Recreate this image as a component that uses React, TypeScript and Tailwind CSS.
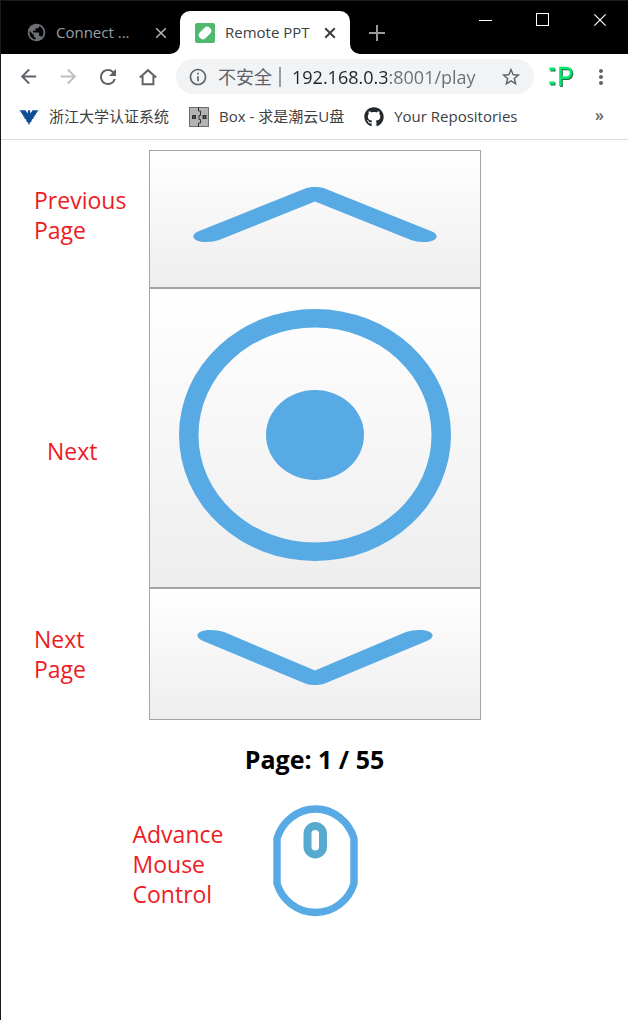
import { useState } from "react";
import type { ReactNode } from "react";
import { FaGithub } from "react-icons/fa";
import {
  MdArrowBack,
  MdArrowForward,
  MdMoreVert,
  MdOutlineInfo,
  MdPublic,
  MdRefresh,
  MdStarBorder,
} from "react-icons/md";

function CloseIcon({ className }: { className: string }) {
  return (
    <svg viewBox="0 0 12 12" className={className} fill="none" stroke="currentColor" aria-hidden="true">
      <path d="M1.2 1.2 10.8 10.8M10.8 1.2 1.2 10.8" />
    </svg>
  );
}

function RemoteIcon() {
  return (
    <svg viewBox="0 0 20 20" className="size-5 shrink-0" aria-hidden="true">
      <rect width="20" height="20" rx="2" fill="#4fba6f" />
      <rect x="3" y="6" width="14" height="8" rx="3.9" fill="#fff" transform="rotate(-45 10 10)" />
      <path d="M12.6 7.4 13.4 6.6" stroke="#b9e0c5" strokeWidth="1" />
    </svg>
  );
}

function TabFlare({ className }: { className: string }) {
  return (
    <svg viewBox="0 0 10 10" className={className} aria-hidden="true">
      <path d="M10 0v10H0A10 10 0 0 0 10 0Z" fill="#fff" />
    </svg>
  );
}

function HomeIcon() {
  return (
    <svg viewBox="0 0 20 20" className="size-5" fill="none" stroke="currentColor" strokeWidth="2" aria-hidden="true">
      <path d="M1.8 10.6 10 3.2l8.2 7.4M4.6 9v8.2h10.8V9" />
    </svg>
  );
}

function EagleIcon() {
  return (
    <svg viewBox="0 0 20 18" className="h-[18px] w-5 shrink-0" aria-hidden="true">
      <path
        d="M0.5 2.200H6.500L8.500 5.500 9 2.800 10 1.800 11 2.800 11.500 5.500 13.500 2.200H19.500L18.800 3.400 17.800 3.800 18 5 16.800 5.400 17 6.600 15.800 7 15.900 8.400 14.600 8.800 14.500 10.800 13 11.200 12.200 14 11 14.400 10 17.400 9 14.400 7.800 14 7 11.200 5.500 10.800 5.400 8.800 4.100 8.400 4.200 7 3 6.600 3.200 5.400 2 5 2.200 3.800 1.200 3.400Z"
        fill="#0f4c96"
      />
    </svg>
  );
}

function BoxIcon() {
  return (
    <svg viewBox="0 0 20 20" className="size-5 shrink-0" aria-hidden="true">
      <rect x=".5" y=".5" width="19" height="19" fill="#b3b3b3" stroke="#6d6d6d" />
      <path d="M9.500 0v4h2v4.500h-1.500v4h1.500V16h-2v4" fill="none" stroke="#333" strokeWidth="1" />
      <path d="M3 8h4v4H3zM13.500 8h4v4h-4z" fill="#333" />
      <path d="M4.500 9.500h1v1h-1zM15 9.500h1v1h-1z" fill="#888" />
    </svg>
  );
}

function SmileyExtensionIcon() {
  return (
    <svg viewBox="0 0 26 24" className="h-6 w-[26px]" fill="none" aria-hidden="true">
      <g stroke="#1f6b48" transform="translate(1 1)">
        <path d="M1.500 4h5M1.500 18h5" strokeWidth="3" />
        <path d="M12.500 21V3h5.500c3.200 0 5 2 5 4.800s-1.800 5-5 5h-5" strokeWidth="2.600" />
      </g>
      <g stroke="#00e76b">
        <path d="M1.500 4h5M1.500 18h5" strokeWidth="3" />
        <path d="M12.500 21V3h5.500c3.200 0 5 2 5 4.800s-1.800 5-5 5h-5" strokeWidth="2.600" />
      </g>
    </svg>
  );
}

function UpIcon() {
  return (
    <svg viewBox="0 0 246 55" className="h-[55px] w-[246px]" fill="#57aae4" aria-hidden="true">
      <path d="M112 2C118-.6 128-.6 134 2L240 44.500C248 48 246 55 231 55Q224 55 219 53L123 14.500 27 53Q22 55 15 55C0 55-2 48 6 44.500Z" />
    </svg>
  );
}

function DownIcon() {
  return (
    <svg viewBox="0 0 238 55" className="h-[55px] w-[238px]" fill="#57aae4" aria-hidden="true">
      <path d="M108 53C114 55.700 124 55.700 130 53L232 10.500C240 7 238 0 223 0Q216 0 210 2L119 40.500 28 2Q22 0 15 0C0 0-2 7 6 10.500Z" />
    </svg>
  );
}

function TargetIcon() {
  return (
    <svg viewBox="0 0 272 252" className="h-[252px] w-[272px]" aria-hidden="true">
      <path
        d="M136 0a136 126 0 1 0 0 252a136 126 0 1 0 0-252ZM136 18.500a116.500 107.500 0 1 1 0 215a116.500 107.500 0 1 1 0-215Z"
        fill="#57aae4"
        fillRule="evenodd"
      />
      <ellipse cx="136" cy="126" rx="49" ry="45" fill="#57aae4" />
    </svg>
  );
}

function MouseIcon() {
  return (
    <svg viewBox="0 0 86 112" className="h-28 w-[86px]" fill="none" aria-hidden="true">
      <path
        d="M5 33.500C10 17 25 4 43.500 4S77 17 82 33.500V78.500C77 95 62 107.500 43.500 107.500S10 95 5 78.500Z"
        stroke="#57aae4"
        strokeWidth="7.400"
        strokeLinejoin="round"
      />
      <rect x="35.500" y="21" width="15.500" height="28.500" rx="7.750" stroke="#57aacd" strokeWidth="8" />
    </svg>
  );
}

function ToolButton({ label, className = "", children }: { label: string; className?: string; children: ReactNode }) {
  return (
    <button type="button" aria-label={label} className={`flex size-6 shrink-0 items-center justify-center ${className}`}>
      {children}
    </button>
  );
}

function Bookmark({ label, icon }: { label: string; icon: ReactNode }) {
  return (
    <a href="#" className="flex items-center gap-[10px] whitespace-nowrap">
      {icon}
      {label}
    </a>
  );
}

const padButton =
  "flex w-full items-center justify-center border border-[#a3a3a3] bg-linear-to-b from-white to-[#eeeeee]";
const noteText = "text-[23px] leading-[30px] text-[#ed1c24]";

export default function App() {
  const [page, setPage] = useState(1);
  const [url, setUrl] = useState("192.168.0.3:8001/play");
  const total = 55;
  const next = () => setPage((p) => Math.min(total, p + 1));
  const previous = () => setPage((p) => Math.max(1, p - 1));

  return (
    <div className="min-h-screen border-t border-l border-[#1a1a1a] bg-white font-['Open_Sans','Noto_Sans_CJK_SC',sans-serif]">
      <header>
        <div className="flex h-[53px] items-end bg-black">
          <div className="flex h-[43px] w-[179px] items-center pr-[13px] pl-[25px] text-[15px] text-[#9aa0a6]">
            <MdPublic className="mr-[9px] size-[21px] shrink-0 text-[#6b6e73]" />
            <button type="button" className="flex-1 text-left whitespace-nowrap">Connect ...</button>
            <button type="button" aria-label="Close Connect" className="text-[#b4b7bb]">
              <CloseIcon className="size-3 stroke-[1.5]" />
            </button>
          </div>
          <div className="relative flex h-[43px] w-[170px] items-center rounded-t-[10px] bg-white pr-[14px] pl-[15px] text-[15px] text-[#3c4043]">
            <TabFlare className="absolute bottom-0 -left-[10px] size-[10px]" />
            <RemoteIcon />
            <button type="button" className="ml-[10px] flex-1 text-left whitespace-nowrap">Remote PPT</button>
            <button type="button" aria-label="Close Remote PPT">
              <CloseIcon className="size-3 stroke-2" />
            </button>
            <TabFlare className="absolute -right-[10px] bottom-0 size-[10px] -scale-x-100" />
          </div>
          <button type="button" aria-label="New tab" className="ml-[19px] flex h-[43px] items-center text-[#9a9a9a]">
            <svg viewBox="0 0 16 16" className="size-4" stroke="currentColor" strokeWidth="2" aria-hidden="true">
              <path d="M8 0v16M0 8h16" />
            </svg>
          </button>
          <div className="ml-auto flex gap-11 self-start pt-3 pr-[21px] text-white">
            <button type="button" aria-label="Minimize">
              <svg viewBox="0 0 13 13" className="size-[13px]" stroke="currentColor" aria-hidden="true">
                <path d="M0 6.500h13" />
              </svg>
            </button>
            <button type="button" aria-label="Maximize" className="size-[13px] border border-white" />
            <button type="button" aria-label="Close window">
              <CloseIcon className="size-[14px]" />
            </button>
          </div>
        </div>

        <div className="flex h-[45px] items-center pr-[15px] pl-[15px] text-[#5f6368]">
          <div className="flex gap-4">
            <ToolButton label="Back"><MdArrowBack className="size-[23px]" /></ToolButton>
            <ToolButton label="Forward" className="text-[#bdbfc1]"><MdArrowForward className="size-[23px]" /></ToolButton>
            <ToolButton label="Reload"><MdRefresh className="size-6" /></ToolButton>
            <ToolButton label="Home"><HomeIcon /></ToolButton>
          </div>
          <div className="ml-4 flex h-[35px] min-w-0 flex-1 items-center rounded-full bg-[#f1f3f4] pr-3 pl-3">
            <MdOutlineInfo className="size-5 shrink-0" />
            <label htmlFor="address" className="ml-[10px] shrink-0 text-[18px] leading-6">不安全</label>
            <span className="ml-[7px] h-5 w-[2px] shrink-0 bg-[#9a9da0]" />
            <input
              id="address"
              value={url}
              onChange={(e) => setUrl(e.target.value)}
              className="ml-[11px] min-w-0 flex-1 bg-linear-to-r from-[#202124] from-[95px] to-[#6a6e73] to-[95px] bg-clip-text text-[18px] leading-6 text-transparent caret-black outline-none"
            />
            <button type="button" aria-label="Bookmark this page" className="ml-2 shrink-0">
              <MdStarBorder className="size-[22px]" />
            </button>
          </div>
          <button type="button" aria-label="Extension" className="ml-[14px] shrink-0"><SmileyExtensionIcon /></button>
          <ToolButton label="Menu" className="ml-[15px]"><MdMoreVert className="size-6" /></ToolButton>
        </div>

        <nav aria-label="Bookmarks" className="flex h-[41px] items-center gap-5 border-b border-[#dadce0] pr-6 pb-[5px] pl-[18px] text-[15px] text-[#3c4043]">
          <Bookmark label="浙江大学认证系统" icon={<EagleIcon />} />
          <Bookmark label="Box - 求是潮云U盘" icon={<BoxIcon />} />
          <Bookmark label="Your Repositories" icon={<FaGithub className="size-5 shrink-0 text-[#24292e]" />} />
          <button type="button" aria-label="More bookmarks" className="ml-auto pb-1 text-base leading-5 font-semibold text-[#5f6368]">»</button>
        </nav>
      </header>

      <main>
        <div className="grid grid-cols-[minmax(148px,1fr)_332px_minmax(147px,1fr)] pt-[10px]">
          <label htmlFor="previous" className={`self-center pr-5 pb-2 pl-[33px] ${noteText}`}>
            Previous<br />Page
          </label>
          <button id="previous" type="button" onClick={previous} className={`col-start-2 h-[138px] pb-[9px] ${padButton}`}>
            <UpIcon />
          </button>
          <label htmlFor="next" className={`col-start-1 self-center pt-[26px] pl-[46px] ${noteText}`}>Next</label>
          <button id="next" type="button" onClick={next} className={`col-start-2 h-[300px] pb-[6px] ${padButton}`}>
            <TargetIcon />
          </button>
          <label htmlFor="next-page" className={`col-start-1 self-center pl-[33px] ${noteText}`}>
            Next<br />Page
          </label>
          <button id="next-page" type="button" onClick={next} className={`col-start-2 h-[132px] pt-[7px] ${padButton}`}>
            <DownIcon />
          </button>
        </div>

        <h1 className="pt-[23px] text-center text-[25px] leading-8 font-bold text-black">
          Page: {page} / {total}
        </h1>

        <div className="grid grid-cols-[1fr_86px_1fr] items-center pt-[30px]">
          <label htmlFor="mouse" className={`w-[139px] justify-self-end pt-[6px] ${noteText}`}>
            Advance<br />Mouse<br />Control
          </label>
          <button id="mouse" type="button">
            <MouseIcon />
          </button>
        </div>
      </main>
    </div>
  );
}
